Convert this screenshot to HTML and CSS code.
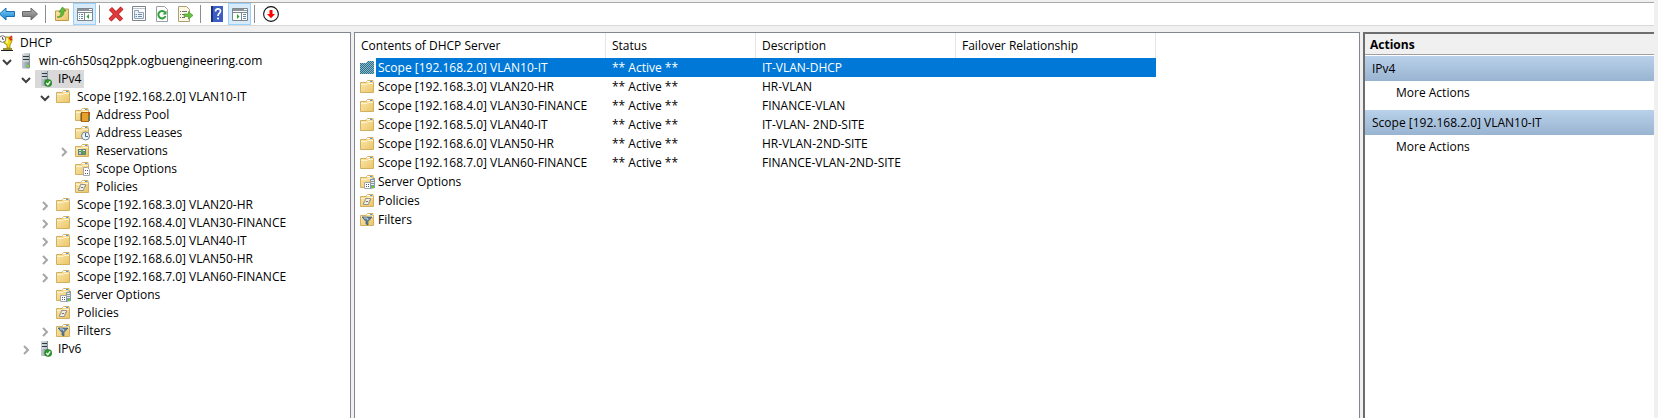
FILE: index.html
```html
<!DOCTYPE html>
<html lang="en">
<head>
<meta charset="utf-8">
<title>DHCP</title>
<link rel="stylesheet" href="styles.css">
</head>
<body>
<svg class="defs" aria-hidden="true">
  <defs>
    <linearGradient id="g-folder" x1="0" y1="0" x2="1" y2="1"><stop offset="0" stop-color="#fce9b0"/><stop offset="1" stop-color="#eac566"/></linearGradient>
    <linearGradient id="g-server" x1="0" y1="0" x2="1" y2="0"><stop offset="0" stop-color="#c3ccd1"/><stop offset="1" stop-color="#7f8c93"/></linearGradient>
    <linearGradient id="g-blue" x1="0" y1="0" x2="0" y2="1"><stop offset="0" stop-color="#7fd0f7"/><stop offset="1" stop-color="#1583cf"/></linearGradient>
    <linearGradient id="g-gray" x1="0" y1="0" x2="0" y2="1"><stop offset="0" stop-color="#b5b5b5"/><stop offset="1" stop-color="#6d6d6d"/></linearGradient>
    <pattern id="dither" width="2" height="2" patternUnits="userSpaceOnUse"><path fill="#0078d7" d="M0 0h1v1H0zM1 1h1v1H1z"/></pattern>
    <symbol id="folder" viewBox="0 0 16 16">
      <path d="M1.500 13.500V3.500H7l1.500-2h5.500v2h.5v10z" fill="url(#g-folder)" stroke="#d3b060"/>
      <path d="M8 2.500h5" stroke="#fff"/><path d="M11 2.500h2" stroke="#4a9be0"/>
      <path d="M2 5.500h6l1-1h5" stroke="#fff3cf" fill="none"/>
    </symbol>
    <symbol id="folder-sel" viewBox="0 0 16 16">
      <path d="M1 14V3h6l2-2h6v13z" fill="#b7b27c"/><path d="M1 14V3h6l2-2h6v13z" fill="url(#dither)"/>
    </symbol>
    <symbol id="pool" viewBox="0 0 16 16">
      <use href="#folder"/><rect x="7.500" y="5.500" width="7" height="9" fill="#e8a02c" stroke="#a96712"/>
      <path d="M6 7h2M6 9h2M6 11h2M6 13h2" stroke="#6b4a1c"/><path d="M15.500 5v3" stroke="#d33"/><path d="M15.500 8v3" stroke="#3aa04a"/><path d="M15.500 11v3" stroke="#3978d0"/>
    </symbol>
    <symbol id="leases" viewBox="0 0 16 16">
      <use href="#folder"/><circle cx="11.500" cy="11" r="4" fill="#eaf4fb" stroke="#71818c"/><path d="M11.500 8v3.500H14" fill="none" stroke="#4c6577"/>
    </symbol>
    <symbol id="reservations" viewBox="0 0 16 16">
      <use href="#folder"/><rect x="4" y="6" width="8" height="6" fill="#6d8075"/><path d="M5 7h2v1H5zM9 7h2v1H9z" fill="#e3eee5"/><path d="M7 7h2v2H7zM9 9h2v2H9z" fill="#49b344"/><path d="M5 9h2v2H5z" fill="#b9cfdf"/>
    </symbol>
    <symbol id="options" viewBox="0 0 16 16">
      <use href="#folder"/><path d="M9.500 6.500h4l2 2v6h-6z" fill="#fff" stroke="#a3a6ad"/><path d="M11 9h1v1h-1zM13 9h1v1h-1zM11 12h1v1h-1zM13 12h1v1h-1z" fill="#44566e"/>
    </symbol>
    <symbol id="server-options" viewBox="0 0 16 16">
      <use href="#folder"/><path d="M5.500 8.500h6v6h-6z" fill="#fff" stroke="#a3a6ad"/><path d="M7 10h1v1H7zM9 10h1v1H9zM7 12h1v1H7zM9 12h1v1H9z" fill="#44566e"/>
      <path d="M11 5l5-1v10l-5 1z" fill="#8b9ba3"/><path d="M12 6.500h3M12 8.500h3M12 10.500h3" stroke="#e4ebee"/><path d="M13 12h2v2h-2z" fill="#59d22b"/>
    </symbol>
    <symbol id="policies" viewBox="0 0 16 16">
      <use href="#folder"/><path d="M6.500 5.500h5v2h-1l-1 4h-5v-2h1z" fill="#f2efe6" stroke="#96938a"/><path d="M7 8.500h2" stroke="#77746a"/>
    </symbol>
    <symbol id="filters" viewBox="0 0 16 16">
      <use href="#folder"/><path d="M3 5h10L9 9.500V13l-2-1V9.500z" fill="#5e7f9b" stroke="#3d5870" stroke-width=".7"/><path d="M5 6h3l1 2" stroke="#c9dceb" fill="none"/>
    </symbol>
    <symbol id="server" viewBox="-1 0 16 16">
      <path d="M4 1.500L6 .5h6v14l-1 1H4z" fill="url(#g-server)"/><path d="M5 3.500h6M5 6.500h6" stroke="#2f3a40"/><path d="M5 2h6M5 5h6M5 8h6" stroke="#edf2f4"/><path d="M9 12h2v2H9z" fill="#66e030"/>
    </symbol>
    <symbol id="server-ok" viewBox="-1 0 16 16">
      <path d="M4 .5L5 0h6v14l-1 1H4z" fill="url(#g-server)"/><path d="M5 2.500h5M5 5.500h5" stroke="#2f3a40"/><path d="M5 1h5M5 4h5M5 7h5" stroke="#edf2f4"/>
      <circle cx="11.200" cy="12" r="3.600" fill="#2d9a2b" stroke="#17701a" stroke-width=".6"/><path d="M9.300 12l1.500 1.700 2.400-3.400" fill="none" stroke="#fff" stroke-width="1.300"/>
    </symbol>
    <symbol id="dhcp" viewBox="1 0 16 16">
      <path d="M5 2h8v4l-2 4v3H8v-3L5 8z" fill="#f0dc14" stroke="#8f8100" stroke-width=".8"/><path d="M8 3v5" stroke="#fffbb0" stroke-width="1.500"/>
      <path d="M4 13h9v2H4z" fill="#9b9230"/><path d="M2 15.500h12" stroke="#222"/>
      <circle cx="3.500" cy="4" r="3.300" fill="#fff" stroke="#777"/><path d="M3.500 2v2.300H5" fill="none" stroke="#333" stroke-width=".8"/><path d="M10 4l3-3M11 5l2-1" stroke="#e21c1c" stroke-width="1.500"/>
    </symbol>
    <symbol id="down" viewBox="0 0 10 10"><path d="M1 3l4 4 4-4" fill="none" stroke="#404040" stroke-width="2"/></symbol>
    <symbol id="right" viewBox="0 0 10 10"><path d="M3 1l4 4-4 4" fill="none" stroke="#a6a6a6" stroke-width="2"/></symbol>
    <symbol id="t-back" viewBox="0 0 16 16"><path d="M.5 8L7 2v3.500h8.500v5H7V14z" fill="url(#g-blue)" stroke="#1b6fb0"/></symbol>
    <symbol id="t-forward" viewBox="0 0 16 16"><path d="M15.500 8L9 2v3.500H.5v5H9V14z" fill="url(#g-gray)" stroke="#6a6a6a"/></symbol>
    <symbol id="t-up" viewBox="0 0 16 16"><path d="M1.500 14.500V5H7l1.500-2h6v11.500z" fill="url(#g-folder)" stroke="#c29a45"/><path d="M3 11c3 0 4-2 4-5H5l3.500-5L12 5h-2c0 4-2 7-7 6z" fill="#62bd3c" stroke="#35831c" stroke-width=".6"/></symbol>
    <symbol id="t-tree" viewBox="0 0 16 16"><path d="M.5 2.500h15v12H.5z" fill="#fff" stroke="#7d858d"/><path d="M1 3h14v2H1z" fill="#8c939a"/><path d="M12 3.500h3" stroke="#fff"/><path d="M1 6.500h14M7.500 6.500v8" stroke="#7d858d"/><path d="M2 8.500h1M2 10.500h1M2 12.500h1M4 8.500h2M4 10.500h2M4 12.500h2" stroke="#5d89b8"/><path d="M12 8v5L9.500 10.500z" fill="#2fa32f"/></symbol>
    <symbol id="t-delete" viewBox="0 0 16 16"><path d="M2.500 2.500l11 11.500M14 2L2 14" stroke="#b31f20" stroke-width="4.200"/><path d="M2.500 2.500l11 11.500M14 2L2 14" stroke="#e2393a" stroke-width="2.800"/></symbol>
    <symbol id="t-props" viewBox="0 0 16 16"><path d="M1.500.5h13v14h-13z" fill="#fff" stroke="#7d858d"/><path d="M2 2.500h12" stroke="#bac5cf"/><path d="M3.500 6.500v-2h4v2h5v6h-9z" fill="#edf3f8" stroke="#8fa2b5"/><path d="M7 8.500h4M7 10.500h4" stroke="#7488a0"/><path d="M4.500 8.500H6M4.500 10.500H6" stroke="#3c9bd0"/></symbol>
    <symbol id="t-refresh" viewBox="0 0 16 16"><path d="M2.500.5h8l3 3v12h-11z" fill="#fff" stroke="#9ba0a5"/><path d="M11 6.500A3.700 3.700 0 1 0 11.500 10" fill="none" stroke="#31a23a" stroke-width="2"/><path d="M12.500 4.500v4h-4z" fill="#31a23a"/></symbol>
    <symbol id="t-export" viewBox="0 0 16 16"><path d="M1.500.5h8l3 3v12h-11z" fill="#fdf8df" stroke="#a9a07b"/><path d="M3 5.500h1M5 5.500h5M3 8.500h1M5 8.500h3M3 11.500h1M5 11.500h3" stroke="#687384"/><path d="M7 8h4.500V5.500L16 9.500 11.500 13v-2.500H7z" fill="#68c041" stroke="#398d20" stroke-width=".6"/></symbol>
    <symbol id="t-help" viewBox="0 0 16 16"><path d="M2 0h12v16H2z" fill="#3d5fc4"/><path d="M2 0h2v16H2z" fill="#1c347f"/><path d="M6.500 5.500C6.500 2 11.500 2.200 11.500 5c0 2.200-2.500 2-2.500 5" fill="none" stroke="#fff" stroke-width="1.700"/><circle cx="9" cy="12.500" r="1.100" fill="#fff"/></symbol>
    <symbol id="t-pane" viewBox="0 0 16 16"><path d="M.5 2.500h15v12H.5z" fill="#fff" stroke="#7d858d"/><path d="M1 3h14v2H1z" fill="#8c939a"/><path d="M12 3.500h3" stroke="#fff"/><path d="M1 6.500h14M9.500 6.500v8" stroke="#7d858d"/><path d="M11 8.500h3M11 10.500h3M11 12.500h3" stroke="#5d89b8"/><path d="M5 8v5l2.500-2.500z" fill="#2fa32f"/></symbol>
    <symbol id="t-down" viewBox="0 0 16 16"><circle cx="8" cy="8" r="7.400" fill="#fff" stroke="#111" stroke-width="1.100"/><path d="M6.500 4h3v4H12l-4 4.300L4 8h2.500z" fill="#f00"/></symbol>
  </defs>
</svg>

<div class="window">
  <div class="toolbar" role="toolbar" aria-label="Standard">
    <button aria-label="Back"><svg><use href="#t-back"/></svg></button>
    <button aria-label="Forward"><svg><use href="#t-forward"/></svg></button>
    <span class="sep"></span>
    <button aria-label="Up one level"><svg><use href="#t-up"/></svg></button>
    <button class="on" aria-label="Show console tree"><svg><use href="#t-tree"/></svg></button>
    <span class="sep"></span>
    <button aria-label="Delete"><svg><use href="#t-delete"/></svg></button>
    <button aria-label="Properties"><svg><use href="#t-props"/></svg></button>
    <button aria-label="Refresh"><svg><use href="#t-refresh"/></svg></button>
    <button aria-label="Export list"><svg><use href="#t-export"/></svg></button>
    <span class="sep"></span>
    <button aria-label="Help"><svg><use href="#t-help"/></svg></button>
    <button class="on" aria-label="Show action pane"><svg><use href="#t-pane"/></svg></button>
    <span class="sep"></span>
    <button aria-label="Deactivate"><svg><use href="#t-down"/></svg></button>
  </div>

  <div class="panes">
    <nav class="tree" aria-label="Console tree">
      <div class="root"><svg><use href="#dhcp"/></svg>DHCP</div>
      <ul>
        <li>
          <div class="row"><button aria-label="Collapse"><svg><use href="#down"/></svg></button><span class="node"><svg><use href="#server"/></svg>win-c6h50sq2ppk.ogbuengineering.com</span></div>
          <ul>
            <li>
              <div class="row"><button aria-label="Collapse"><svg><use href="#down"/></svg></button><span class="node current"><svg><use href="#server-ok"/></svg>IPv4</span></div>
              <ul>
                <li>
                  <div class="row"><button aria-label="Collapse"><svg><use href="#down"/></svg></button><span class="node"><svg><use href="#folder"/></svg>Scope [192.168.2.0] VLAN10-IT</span></div>
                  <ul>
                    <li class="row leaf"><span class="node"><svg><use href="#pool"/></svg>Address Pool</span></li>
                    <li class="row leaf"><span class="node"><svg><use href="#leases"/></svg>Address Leases</span></li>
                    <li class="row"><button aria-label="Expand"><svg><use href="#right"/></svg></button><span class="node"><svg><use href="#reservations"/></svg>Reservations</span></li>
                    <li class="row leaf"><span class="node"><svg><use href="#options"/></svg>Scope Options</span></li>
                    <li class="row leaf"><span class="node"><svg><use href="#policies"/></svg>Policies</span></li>
                  </ul>
                </li>
                <li class="row"><button aria-label="Expand"><svg><use href="#right"/></svg></button><span class="node"><svg><use href="#folder"/></svg>Scope [192.168.3.0] VLAN20-HR</span></li>
                <li class="row"><button aria-label="Expand"><svg><use href="#right"/></svg></button><span class="node"><svg><use href="#folder"/></svg>Scope [192.168.4.0] VLAN30-FINANCE</span></li>
                <li class="row"><button aria-label="Expand"><svg><use href="#right"/></svg></button><span class="node"><svg><use href="#folder"/></svg>Scope [192.168.5.0] VLAN40-IT</span></li>
                <li class="row"><button aria-label="Expand"><svg><use href="#right"/></svg></button><span class="node"><svg><use href="#folder"/></svg>Scope [192.168.6.0] VLAN50-HR</span></li>
                <li class="row"><button aria-label="Expand"><svg><use href="#right"/></svg></button><span class="node"><svg><use href="#folder"/></svg>Scope [192.168.7.0] VLAN60-FINANCE</span></li>
                <li class="row leaf"><span class="node"><svg><use href="#server-options"/></svg>Server Options</span></li>
                <li class="row leaf"><span class="node"><svg><use href="#policies"/></svg>Policies</span></li>
                <li class="row"><button aria-label="Expand"><svg><use href="#right"/></svg></button><span class="node"><svg><use href="#filters"/></svg>Filters</span></li>
              </ul>
            </li>
            <li class="row"><button aria-label="Expand"><svg><use href="#right"/></svg></button><span class="node"><svg><use href="#server-ok"/></svg>IPv6</span></li>
          </ul>
        </li>
      </ul>
    </nav>

    <main class="list">
      <table>
        <colgroup><col class="c-name"><col class="c-status"><col class="c-text"><col class="c-text"></colgroup>
        <thead>
          <tr><th>Contents of DHCP Server</th><th>Status</th><th>Description</th><th>Failover Relationship</th></tr>
        </thead>
        <tbody>
          <tr class="selected"><td><span class="name"><svg><use href="#folder-sel"/></svg>Scope [192.168.2.0] VLAN10-IT</span></td><td>** Active **</td><td>IT-VLAN-DHCP</td><td></td></tr>
          <tr><td><span class="name"><svg><use href="#folder"/></svg>Scope [192.168.3.0] VLAN20-HR</span></td><td>** Active **</td><td>HR-VLAN</td><td></td></tr>
          <tr><td><span class="name"><svg><use href="#folder"/></svg>Scope [192.168.4.0] VLAN30-FINANCE</span></td><td>** Active **</td><td>FINANCE-VLAN</td><td></td></tr>
          <tr><td><span class="name"><svg><use href="#folder"/></svg>Scope [192.168.5.0] VLAN40-IT</span></td><td>** Active **</td><td>IT-VLAN- 2ND-SITE</td><td></td></tr>
          <tr><td><span class="name"><svg><use href="#folder"/></svg>Scope [192.168.6.0] VLAN50-HR</span></td><td>** Active **</td><td>HR-VLAN-2ND-SITE</td><td></td></tr>
          <tr><td><span class="name"><svg><use href="#folder"/></svg>Scope [192.168.7.0] VLAN60-FINANCE</span></td><td>** Active **</td><td>FINANCE-VLAN-2ND-SITE</td><td></td></tr>
          <tr><td><span class="name"><svg><use href="#server-options"/></svg>Server Options</span></td><td></td><td></td><td></td></tr>
          <tr><td><span class="name"><svg><use href="#policies"/></svg>Policies</span></td><td></td><td></td><td></td></tr>
          <tr><td><span class="name"><svg><use href="#filters"/></svg>Filters</span></td><td></td><td></td><td></td></tr>
        </tbody>
      </table>
    </main>

    <aside class="actions">
      <h2>Actions</h2>
      <h3>IPv4</h3>
      <button>More Actions</button>
      <h3>Scope [192.168.2.0] VLAN10-IT</h3>
      <button>More Actions</button>
    </aside>
  </div>
</div>
</body>
</html>
```
FILE: styles.css
```css
* { box-sizing: border-box; }

body {
  margin: 0;
  background: #f0f0f0;
  color: #000;
  font: 12px/18px "Open Sans", "Noto Sans", sans-serif;
}

.defs { position: absolute; width: 0; height: 0; }

svg { flex: none; width: 16px; height: 16px; }

ul { margin: 0; padding: 0; list-style: none; }

button {
  margin: 0;
  padding: 0;
  border: 0;
  background: none;
  color: inherit;
  font: inherit;
}

.window {
  display: flex;
  flex-direction: column;
  height: 100vh;
  padding: 2px 4px 0 0;
  overflow: hidden;
}

.toolbar {
  display: flex;
  align-items: center;
  height: 24px;
  margin-left: -5px;
  border-top: 1px solid #a9a9a9;
  border-bottom: 1px solid #d9d9d9;
  background: #fff;
}

.toolbar button {
  display: flex;
  align-items: center;
  justify-content: center;
  width: 23px;
  height: 22px;
}

.toolbar .on {
  border: 1px solid #99d1ff;
  background: #d9ebf9;
}

.sep {
  width: 1px;
  height: 18px;
  margin: 0 4px;
  background: #8d8d8d;
}

.on + .sep { margin-left: 3px; }

.panes {
  display: flex;
  flex: 1;
  gap: 3px;
  min-height: 0;
  padding-top: 6px;
}

.tree {
  flex: 0 0 351px;
  padding-top: 1px;
  border: solid #828790;
  border-width: 1px 1px 0 0;
  background: #fff;
  white-space: nowrap;
}

.root { display: flex; align-items: center; gap: 4px; height: 18px; }

.tree ul ul { padding-left: 19px; }

.row { display: flex; align-items: center; height: 18px; }

.row button {
  display: flex;
  align-items: center;
  justify-content: center;
  width: 14px;
  height: 18px;
  margin-right: 2px;
  padding-top: 2px;
}

.row button svg { width: 10px; height: 10px; }

.leaf { padding-left: 16px; }

.node {
  display: flex;
  align-items: center;
  gap: 6px;
  height: 18px;
  padding: 0 3px 0 1px;
}

.current { background: #d9d9d9; }

.list {
  flex: 1;
  min-width: 0;
  border: solid #828790;
  border-width: 1px 1px 0;
  background: #fff;
  overflow: hidden;
}

table {
  width: 801px;
  border-spacing: 0;
  table-layout: fixed;
  white-space: nowrap;
}

.c-name { width: 251px; }
.c-status { width: 150px; }
.c-text { width: 200px; }

th {
  height: 25px;
  padding: 0 6px;
  border-right: 1px solid #e5e5e5;
  font-weight: 400;
  text-align: left;
}

td { height: 19px; padding: 0 6px; }

td:first-child { padding: 0 0 0 4px; }

.name { display: flex; align-items: center; gap: 3px; }

.selected {
  background: linear-gradient(to right, #fff 21px, #0078d7 21px);
  color: #fff;
}

.actions {
  display: flex;
  flex: 0 0 291px;
  flex-direction: column;
  border: solid #6d6d6d;
  border-width: 2px 0 0 2px;
  background: #fff;
}

.actions h2 {
  height: 21px;
  margin: 0 0 1px;
  padding-left: 5px;
  border-bottom: 1px solid #a0a0a0;
  background: #f0f0f0;
  font-size: 12px;
  font-weight: 700;
  line-height: 22px;
}

.actions h3 {
  height: 25px;
  margin: 0;
  padding-left: 7px;
  background: linear-gradient(#b9d1ea, #99b4d1);
  font-size: 12px;
  font-weight: 400;
  line-height: 26px;
}

.actions button {
  height: 24px;
  margin-bottom: 5px;
  padding-left: 31px;
  text-align: left;
}
```
